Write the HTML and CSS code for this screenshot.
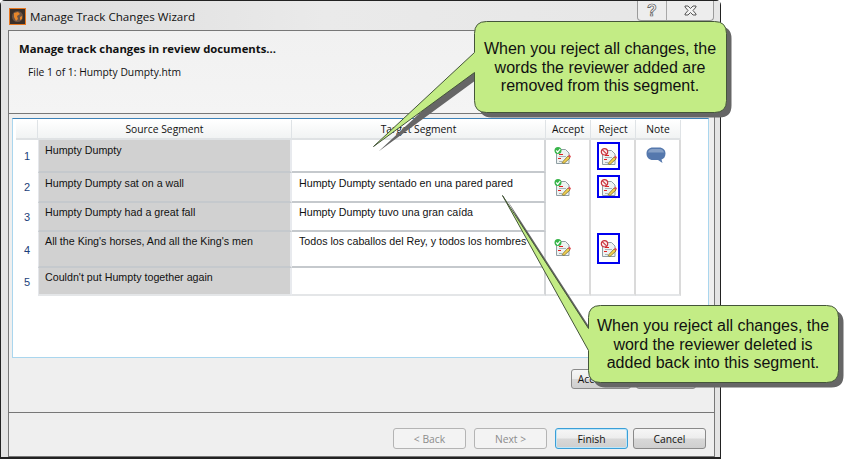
FILE: index.html
```html
<!DOCTYPE html>
<html lang="en">
<head>
    <meta charset="UTF-8">
    <title>Manage Track Changes Wizard</title>
    <link rel="stylesheet" href="styles.css">
</head>
<body>

<!-- shared icons -->
<svg class="icon-defs" width="0" height="0">
    <defs>
        <g id="docBase">
            <path d="M2.5 2.500H11.500L15 6V16.500H2.500Z" fill="#eef2f2" stroke="#8f9ea3"/>
            <path d="M5 7.500H9" stroke="#e02020"/>
            <path d="M5 9.500H12M5 14.500H8" stroke="#a9b4b8"/>
            <path d="M4 11.500H7" stroke="#e02020"/>
            <path d="M8 15.500L14 9L16 11L10 16.500Z" fill="#f2cf52" stroke="#6f6420" stroke-width="0.7"/>
            <path d="M14 9L15.500 7.500L17 9.500L16 11Z" fill="#e0525a"/>
        </g>
        <symbol id="iconAccept" viewBox="0 0 17 17">
            <use href="#docBase"/>
            <circle cx="4" cy="3.500" r="3.500" fill="#38b54a"/>
            <path d="M2.200 3.500L3.700 5.200L6.200 2" fill="none" stroke="#fff" stroke-width="1.200"/>
        </symbol>
        <symbol id="iconReject" viewBox="0 0 17 17">
            <use href="#docBase"/>
            <circle cx="4.500" cy="3.800" r="3.200" fill="#fbeaea" stroke="#c8323c" stroke-width="1.200"/>
            <path d="M2.400 1.800L6.600 5.800" stroke="#c8323c" stroke-width="1.100"/>
        </symbol>
    </defs>
</svg>

<div class="window">
    <div class="titlebar">
        <svg class="app-icon" width="17" height="17" viewBox="0 0 17 17">
            <rect x="0.5" y="0.5" width="16" height="16" fill="#3b2f28" stroke="#e8771f"/>
            <circle cx="8.5" cy="8.5" r="5.5" fill="#6b5344"/>
            <path d="M5 5L9 4L11 6L8 8L9 11L7 13L5 9ZM11 9L13 8L13 11L11 12Z" fill="#e8862a"/>
        </svg>
        <span class="title">Manage Track Changes Wizard</span>
        <div class="caption-btns">
            <div class="caption-btn caption-help">?</div>
            <div class="caption-btn caption-close">
                <svg width="13" height="11" viewBox="0 0 13 11">
                    <path d="M1 1H4L6.5 3.5L9 1H12V2L9 5.5L12 9V10H9L6.5 7.5L4 10H1V9L4 5.5L1 2Z" fill="#f4f4f4" stroke="#555"/>
                </svg>
            </div>
        </div>
    </div>

    <div class="panel">
        <div class="wizard-head">
            <h1>Manage track changes in review documents...</h1>
            <p>File 1 of 1: Humpty Dumpty.htm</p>
        </div>

        <div class="wizard-body">
            <div class="grid-box">
                <table class="seg-table">
                    <colgroup>
                        <col class="col-num"><col class="col-seg"><col class="col-seg">
                        <col class="col-act"><col class="col-act"><col class="col-act">
                    </colgroup>
                    <thead>
                        <tr>
                            <th></th>
                            <th>Source Segment</th>
                            <th>Target Segment</th>
                            <th>Accept</th>
                            <th>Reject</th>
                            <th>Note</th>
                        </tr>
                    </thead>
                    <tbody>
                        <tr class="row-a">
                            <td class="num">1</td>
                            <td class="source">Humpty Dumpty</td>
                            <td class="target"></td>
                            <td class="act"><svg class="doc-icon"><use href="#iconAccept"/></svg></td>
                            <td class="act"><div class="reject-box box-a"><svg class="doc-icon"><use href="#iconReject"/></svg></div></td>
                            <td class="act">
                                <svg class="note-icon" width="20" height="17" viewBox="0 0 20 17">
                                    <path d="M7 0.500H13C17 0.500 19.500 3 19.500 6.500C19.500 10 17.500 12 15.500 12.500L16.500 16L12 13H7C3 13 0.500 10.500 0.500 6.500C0.500 3 3 0.500 7 0.500Z" fill="#5578ad"/>
                                    <path d="M6 2H14C16 2 17.500 3.500 18 5.500H2C2.500 3.500 4 2 6 2Z" fill="#86a0c6"/>
                                </svg>
                            </td>
                        </tr>
                        <tr class="row-b">
                            <td class="num">2</td>
                            <td class="source">Humpty Dumpty sat on a wall</td>
                            <td class="target">Humpty Dumpty sentado en una pared pared</td>
                            <td class="act"><svg class="doc-icon"><use href="#iconAccept"/></svg></td>
                            <td class="act"><div class="reject-box box-b"><svg class="doc-icon"><use href="#iconReject"/></svg></div></td>
                            <td class="act"></td>
                        </tr>
                        <tr class="row-c">
                            <td class="num">3</td>
                            <td class="source">Humpty Dumpty had a great fall</td>
                            <td class="target">Humpty Dumpty tuvo una gran caída</td>
                            <td class="act"></td>
                            <td class="act"></td>
                            <td class="act"></td>
                        </tr>
                        <tr class="row-d">
                            <td class="num">4</td>
                            <td class="source">All the King's horses, And all the King's men</td>
                            <td class="target">Todos los caballos del Rey, y todos los hombres</td>
                            <td class="act"><svg class="doc-icon"><use href="#iconAccept"/></svg></td>
                            <td class="act"><div class="reject-box box-d"><svg class="doc-icon"><use href="#iconReject"/></svg></div></td>
                            <td class="act"></td>
                        </tr>
                        <tr class="row-e">
                            <td class="num">5</td>
                            <td class="source">Couldn't put Humpty together again</td>
                            <td class="target"></td>
                            <td class="act"></td>
                            <td class="act"></td>
                            <td class="act"></td>
                        </tr>
                    </tbody>
                </table>
            </div>

            <div class="actions">
                <button class="btn btn-small">Accept All</button>
                <button class="btn btn-small">Reject All</button>
            </div>
        </div>

        <div class="wizard-foot">
            <button class="btn btn-wide btn-off">&lt; Back</button>
            <button class="btn btn-wide btn-off">Next &gt;</button>
            <button class="btn btn-wide btn-main">Finish</button>
            <button class="btn btn-wide">Cancel</button>
        </div>
    </div>
</div>

<!-- callouts lie over the dialog -->
<svg class="callout-art" width="853" height="459" viewBox="0 0 853 459">
    <path class="shade" transform="translate(5 5)" d="M486.500 21.500H714.500Q726.500 21.500 726.500 33.500V100.500Q726.500 112.500 714.500 112.500H486.500Q474.500 112.500 474.500 100.500V72.500L373.500 146.500L474.500 52.500V33.500Q474.500 21.500 486.500 21.500Z"/>
    <path class="bubble" d="M486.500 21.500H714.500Q726.500 21.500 726.500 33.500V100.500Q726.500 112.500 714.500 112.500H486.500Q474.500 112.500 474.500 100.500V72.500L373.500 146.500L474.500 52.500V33.500Q474.500 21.500 486.500 21.500Z"/>
    <path class="shade" transform="translate(5 5)" d="M600.500 305.500H826.500Q838.500 305.500 838.500 317.500V370.500Q838.500 382.500 826.500 382.500H600.500Q588.500 382.500 588.500 370.500V350.500L502.500 195.500L588.500 328.500V317.500Q588.500 305.500 600.500 305.500Z"/>
    <path class="bubble" d="M600.500 305.500H826.500Q838.500 305.500 838.500 317.500V370.500Q838.500 382.500 826.500 382.500H600.500Q588.500 382.500 588.500 370.500V350.500L502.500 195.500L588.500 328.500V317.500Q588.500 305.500 600.500 305.500Z"/>
</svg>
<div class="callout-text text-top">When you reject all changes, the<br>words the reviewer added are<br>removed from this segment.</div>
<div class="callout-text text-bottom">When you reject all changes, the<br>word the reviewer deleted is<br>added back into this segment.</div>

</body>
</html>
```

FILE: styles.css
```css
body {
    margin: 0;
    background: #fff;
    font-family: "Liberation Sans", Arial, sans-serif;
    color: #111;
}
.icon-defs {
    position: absolute;
}

/* window frame */
.window {
    width: 719px;
    height: 456px;
    border: 1px solid #222;
    border-bottom-width: 2px;
    border-radius: 5px 5px 0 0;
    background: #e4e4e4;
    display: flex;
    flex-direction: column;
}
.titlebar {
    height: 29px;
    display: flex;
    align-items: flex-start;
    padding-left: 8px;
    background: linear-gradient(to right, #dcdcdc, #eaeaea 45%, #e6e6e6);
}
.app-icon {
    margin-top: 7px;
}
.title {
    font-family: "Open Sans", sans-serif;
    font-size: 11.6px;
    margin: 8px 0 0 4px;
}
.caption-btns {
    margin-left: auto;
    margin-right: 6px;
    display: flex;
    height: 19px;
    border: 1px solid #9a9a9a;
    border-top: 0;
    border-radius: 0 0 4px 4px;
    background: #ededed;
}
.caption-btn {
    display: flex;
    align-items: center;
    justify-content: center;
}
.caption-help {
    width: 28px;
    border-right: 1px solid #a8a8a8;
    font-size: 16px;
    font-weight: bold;
    color: #f6f6f6;
    -webkit-text-stroke: 0.7px #555;
}
.caption-close {
    width: 46px;
}

/* wizard panel */
.panel {
    flex: 1;
    margin: 0 5px 0 7px;
    border: 1px solid #777;
    background: #efefef;
    display: flex;
    flex-direction: column;
}
.wizard-head {
    height: 83px;
    box-sizing: border-box;
    padding: 11px 0 0 10px;
    border-bottom: 1px solid #777;
    background: linear-gradient(to bottom, #f1f1f1, #f4f4f4);
}
.wizard-head h1 {
    margin: 0;
    font-family: "Open Sans", sans-serif;
    font-size: 11.3px;
    line-height: 14px;
    font-weight: 700;
}
.wizard-head p {
    margin: 9px 0 0 9px;
    font-family: "Open Sans", sans-serif;
    font-size: 10.3px;
    line-height: 14px;
}
.wizard-body {
    height: 298px;
    box-sizing: border-box;
    padding: 4px 5px 0 3px;
}
.grid-box {
    height: 240px;
    box-sizing: border-box;
    padding: 1px 3px 0;
    background: #fff;
    border: 1px solid #aad6ee;
    border-top: 1px solid #3d82b8;
}

/* segment table */
.seg-table {
    table-layout: fixed;
    border-collapse: separate;
    border-spacing: 0;
    width: 665px;
    font-size: 10.7px;
}
.col-num {
    width: 22px;
}
.col-seg {
    width: 254px;
}
.col-act {
    width: 45px;
}
.seg-table th {
    height: 18px;
    padding: 0;
    font-family: "Open Sans", sans-serif;
    font-size: 10.3px;
    font-weight: 400;
    background: linear-gradient(to bottom, #fff, #f1f3f3);
    border-right: 1px solid #dfe3e6;
    border-bottom: 2px solid #dfe2e4;
}
.seg-table td {
    padding: 0;
    vertical-align: top;
    box-sizing: border-box;
}
.row-a td {
    height: 33px;
}
.row-b td {
    height: 30px;
}
.row-c td {
    height: 29px;
}
.row-d td {
    height: 36px;
}
.row-e td {
    height: 28px;
}
.seg-table .num {
    padding-bottom: 2px;
    text-align: center;
    vertical-align: middle;
    color: #1c3f7a;
    font-size: 11px;
}
.seg-table .row-d .num,
.seg-table .row-e .num {
    padding-bottom: 0;
}
.seg-table .source {
    background: #d1d1d1;
    padding: 3px 6px 0;
    border-left: 1px solid #e4e6ea;
    border-right: 2px solid #e8eaee;
    border-bottom: 2px solid #c5c9cd;
}
.seg-table .row-a .source,
.seg-table .row-b .source {
    padding-top: 4px;
}
.seg-table .target {
    padding: 3px 7px 0;
    border-right: 2px solid #d4d6d8;
    border-bottom: 2px solid #c5c9cd;
}
.seg-table .row-b .target {
    padding-top: 4px;
}
.seg-table .row-e .target,
.seg-table .row-e .source {
    border-bottom-color: #e4e6e8;
}
.seg-table .act {
    border-right: 2px solid #dadada;
}
.row-e .act {
    border-bottom: 2px solid #e4e6e8;
}
.doc-icon {
    display: block;
    width: 17px;
    height: 17px;
    margin: 7px 0 0 8px;
}
.row-b .doc-icon {
    margin-top: 6px;
}
.note-icon {
    display: block;
    margin: 7px 0 0 10px;
}
.reject-box {
    width: 23px;
    box-sizing: border-box;
    margin-left: 6px;
    border: 2px solid #0000f0;
}
.reject-box .doc-icon {
    margin: 4px 0 0 1px;
}
.box-a {
    height: 28px;
    margin-top: 2px;
}
.box-b {
    height: 23px;
    margin-top: 2px;
}
.row-b .box-b .doc-icon {
    margin-top: 2px;
}
.box-d {
    height: 31px;
    margin-top: 1px;
}
.box-d .doc-icon {
    margin-top: 5px;
}

/* buttons */
.actions {
    display: flex;
    justify-content: flex-end;
    gap: 5px;
    margin-top: 11px;
    padding-right: 13px;
}
.btn {
    box-sizing: border-box;
    padding: 0;
    font-family: "Open Sans", sans-serif;
    font-size: 10.3px;
    color: #111;
    border: 1px solid #8a8a8a;
    border-radius: 3px;
    background: linear-gradient(to bottom, #f6f6f6, #ededed 48%, #d8d8d8 52%, #cfcfcf);
}
.btn-small {
    width: 60px;
    height: 20px;
}
.wizard-foot {
    flex: 1;
    display: flex;
    align-items: flex-start;
    justify-content: flex-end;
    padding: 15px 8px 0 0;
    border-top: 1px solid #777;
}
.btn-wide {
    width: 73px;
    height: 21px;
    margin-left: 8px;
}
.btn-wide:last-child {
    margin-left: 5px;
}
.btn-off {
    color: #8c8c8c;
    border-color: #b4b4b4;
    background: #f3f3f3;
}
.btn-main {
    border-color: #3a9fd8;
    box-shadow: inset 0 0 0 1px #bfe6f8;
}

/* callouts */
.callout-art {
    position: absolute;
    left: 0;
    top: 0;
}
.shade {
    fill: #666;
}
.bubble {
    fill: #c3ec85;
    stroke: #44553a;
    stroke-width: 1;
}
.callout-text {
    position: absolute;
    font-size: 16px;
    line-height: 18.500px;
    text-align: center;
    color: #111;
    white-space: nowrap;
}
.text-top {
    left: 474px;
    width: 252px;
    top: 40px;
}
.text-bottom {
    left: 588px;
    width: 250px;
    top: 317px;
}
```
